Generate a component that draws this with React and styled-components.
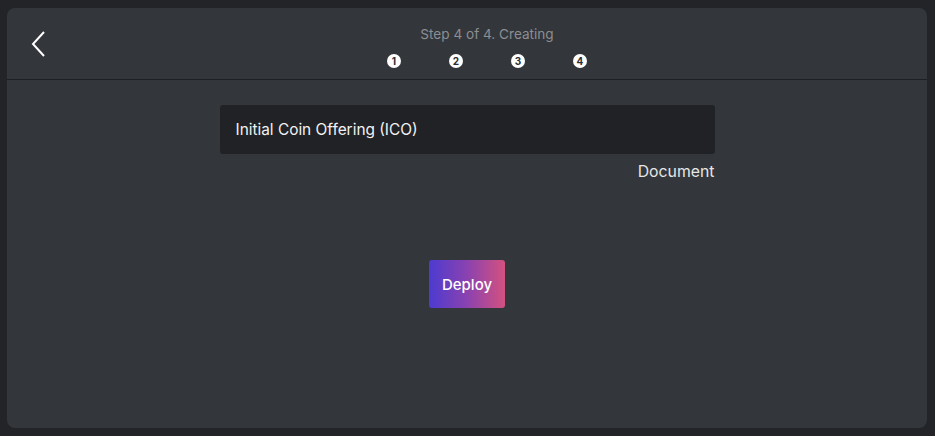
import React from 'react';
import styled, { createGlobalStyle } from 'styled-components';

const Global = createGlobalStyle`
  html, body {
    margin: 0;
    padding: 0;
    background: #232428;
    font-family: Inter, "Noto Sans", "Liberation Sans", sans-serif;
  }
`;

const S = {
  Page: styled.div`
    box-sizing: border-box;
    width: 935px;
    height: 436px;
    padding: 8px 8px 8px 7px;
    background: #232428;
  `,
  Panel: styled.div`
    display: flex;
    flex-direction: column;
    height: 100%;
    border-radius: 8px;
    background: #33363b;
    overflow: hidden;
  `,
  Header: styled.header`
    display: grid;
    grid-template-columns: 80px 1fr 40px;
    height: 71px;
    border-bottom: 1px solid #1f2023;
  `,
  Back: styled.button`
    display: flex;
    align-items: flex-start;
    padding: 22px 0 0 23px;
    border: 0;
    background: none;
    cursor: pointer;
  `,
  Steps: styled.div`
    display: flex;
    flex-direction: column;
    align-items: center;
    padding-top: 18px;
  `,
  StepTitle: styled.div`
    color: #8c8e92;
    font-size: 13.6px;
    line-height: 16px;
  `,
  Dots: styled.div`
    display: flex;
    gap: 48px;
    margin-top: 12px;
  `,
  Dot: styled.span`
    display: flex;
    align-items: center;
    justify-content: center;
    width: 14px;
    height: 14px;
    border-radius: 50%;
    background: #ffffff;
    color: #2b2d31;
    font-size: 10px;
    font-weight: 700;
  `,
  Main: styled.main`
    display: flex;
    flex-direction: column;
    align-items: center;
    padding-top: 25px;
  `,
  Field: styled.div`
    box-sizing: border-box;
    display: flex;
    align-items: center;
    width: 495px;
    height: 49px;
    padding: 0 16px;
    border-radius: 3px;
    background: #212226;
    color: #f2f2f2;
    font-size: 15.4px;
  `,
  Hint: styled.div`
    width: 495px;
    margin-top: 9px;
    text-align: right;
    color: #e6e6e6;
    font-size: 15.8px;
    line-height: 18px;
  `,
  Deploy: styled.button`
    width: 76px;
    height: 48px;
    margin-top: 79px;
    border: 0;
    border-radius: 3px;
    background: linear-gradient(90deg, #4c3bd0 0%, #8a42b0 50%, #d4517f 100%);
    color: #ffffff;
    font-family: inherit;
    font-size: 15px;
    font-weight: 500;
    cursor: pointer;
  `,
};

const App = () => (
  <S.Page>
    <Global />
    <S.Panel>
      <S.Header>
        <S.Back aria-label="Back">
          <svg width="18" height="28" viewBox="0 0 18 28">
            <path d="M14 2 L3 14 L14 26" fill="none" stroke="#ffffff" strokeWidth="2" />
          </svg>
        </S.Back>
        <S.Steps>
          <S.StepTitle>Step 4 of 4. Creating</S.StepTitle>
          <S.Dots>
            {[1, 2, 3, 4].map(n => (
              <S.Dot key={n}>{n}</S.Dot>
            ))}
          </S.Dots>
        </S.Steps>
        <div />
      </S.Header>
      <S.Main>
        <S.Field>Initial Coin Offering (ICO)</S.Field>
        <S.Hint>Document</S.Hint>
        <S.Deploy>Deploy</S.Deploy>
      </S.Main>
    </S.Panel>
  </S.Page>
);

export default App;
